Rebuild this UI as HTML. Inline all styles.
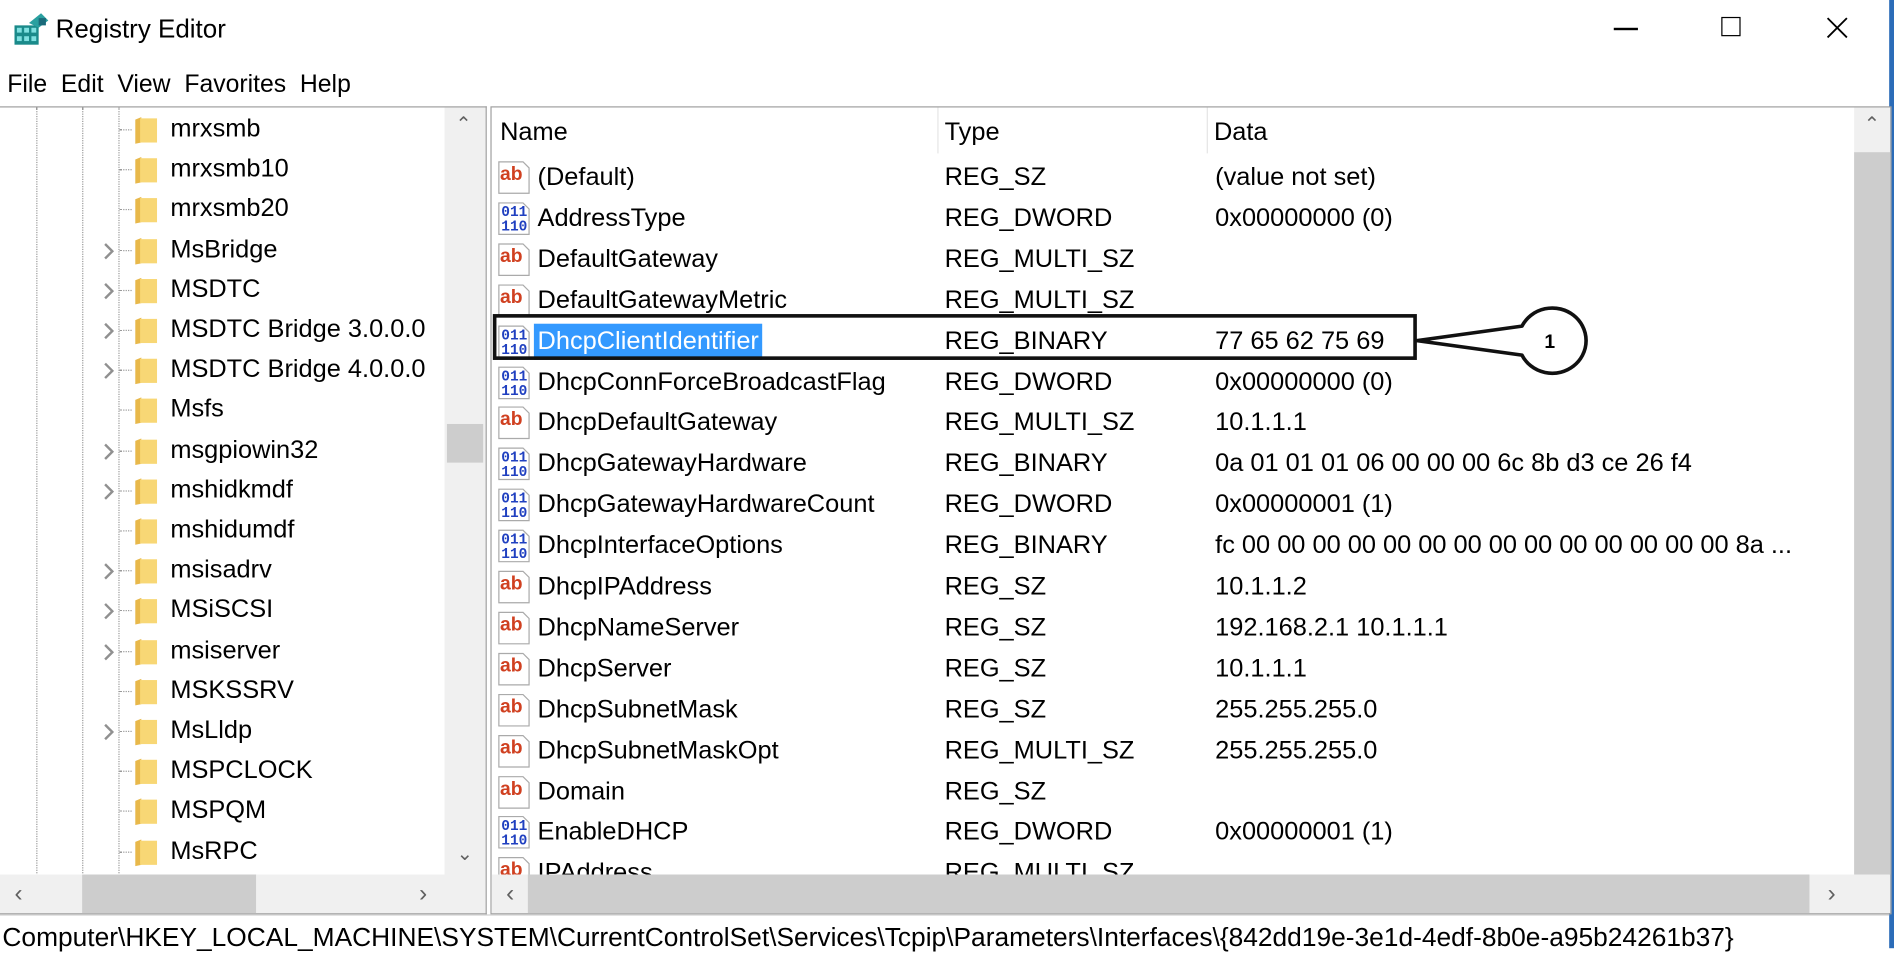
<!DOCTYPE html><html><head><meta charset="utf-8"><style>
html,body{margin:0;padding:0;width:1894px;height:948px;overflow:hidden;background:#fff}
#w{position:absolute;left:0;top:0;width:1568px;height:785px;transform:scale(1.20791);transform-origin:0 0;font-family:"Liberation Sans",sans-serif;color:#000;font-size:21px}
.a{position:absolute;white-space:nowrap}
.row{position:absolute;height:30px;line-height:30px;white-space:nowrap}
.sb{position:absolute;background:#f0f0f0}
.th{position:absolute;background:#cdcdcd}
.ar{position:absolute;color:#606060;font-size:16px}
</style></head><body><div id="w">
<svg class="a" style="left:10px;top:9px" width="32" height="30" viewBox="0 0 32 30"><rect x="2" y="12" width="20" height="16" fill="#1a8a8a"/><g fill="#7fe0e0"><rect x="4" y="14" width="4" height="4"/><rect x="10" y="14" width="4" height="4"/><rect x="16" y="14" width="4" height="4"/><rect x="4" y="21" width="4" height="4"/><rect x="10" y="21" width="4" height="4"/><rect x="16" y="21" width="4" height="4"/></g><path d="M14 10 L24 2 L30 8 L22 14Z" fill="#2aa0a0"/><rect x="22" y="6" width="6" height="6" fill="#1a6a7a"/></svg>
<div class="a" style="left:46px;top:12px;font-size:21.5px">Registry Editor</div>
<div class="a" style="left:1336px;top:23px;width:20px;height:1.5px;background:#000"></div>
<div class="a" style="left:1425px;top:14px;width:16px;height:16px;border:1.5px solid #000;box-sizing:border-box"></div>
<svg class="a" style="left:1512px;top:14px" width="18" height="18"><path d="M1 1L17 17M17 1L1 17" stroke="#000" stroke-width="1.5"/></svg>
<div class="a" style="left:1564px;top:0;width:4px;height:785px;background:#2b6cb8"></div>
<div class="a" style="left:6px;top:58px;font-size:20.5px">File&nbsp; Edit&nbsp; View&nbsp; Favorites&nbsp; Help</div>
<div class="a" style="left:0;top:88px;width:402px;height:667px;border:1px solid #a0a0a0;border-left:none;overflow:hidden">
<div class="a" style="left:30px;top:0;height:640px;border-left:1px dotted #999"></div>
<div class="a" style="left:68px;top:0;height:640px;border-left:1px dotted #999"></div>
<div class="a" style="left:98px;top:0;height:640px;border-left:1px dotted #999"></div>
<div id="tree"></div>
<div class="sb" style="left:368px;top:0;width:34px;height:635px"></div>
<div class="th" style="left:370px;top:262px;width:30px;height:32px"></div>
<div class="ar" style="left:377px;top:4px">&#8963;</div>
<div class="ar" style="left:378px;top:608px">&#8964;</div>
<div class="sb" style="left:0;top:635px;width:402px;height:32px"></div>
<div class="th" style="left:68px;top:635px;width:144px;height:32px"></div>
<div class="ar" style="left:12px;top:640px;font-size:20px">&#8249;</div>
<div class="ar" style="left:347px;top:640px;font-size:20px">&#8250;</div>
</div>
<div class="a" style="left:406px;top:88px;width:1158px;height:667px;border:1px solid #a0a0a0;overflow:hidden">
<div class="a" style="left:7px;top:9px">Name</div>
<div class="a" style="left:375px;top:9px">Type</div>
<div class="a" style="left:598px;top:9px">Data</div>
<div class="a" style="left:369px;top:0;height:38px;border-left:1px solid #e5e5e5"></div>
<div class="a" style="left:592px;top:0;height:38px;border-left:1px solid #e5e5e5"></div>
<div id="list"></div>
<div class="sb" style="left:1128px;top:0;width:30px;height:635px"></div>
<div class="th" style="left:1128px;top:37px;width:30px;height:598px"></div>
<div class="ar" style="left:1136px;top:4px">&#8963;</div>
<div class="sb" style="left:0;top:635px;width:1158px;height:32px"></div>
<div class="th" style="left:30px;top:635px;width:1061px;height:32px"></div>
<div class="ar" style="left:12px;top:640px;font-size:20px">&#8249;</div>
<div class="ar" style="left:1106px;top:640px;font-size:20px">&#8250;</div>
</div>
<div class="a" style="left:408px;top:260px;width:765px;height:38px;border:3px solid #111;box-sizing:border-box"></div>
<svg class="a" style="left:1170px;top:250px" width="150" height="64"><path d="M3 32 L90 20 A28 27 0 1 1 90 44 Z" fill="#fff" stroke="#111" stroke-width="3" stroke-linejoin="round"/><text x="113" y="38" font-family="Liberation Sans" font-size="16" font-weight="bold" text-anchor="middle">1</text></svg>
<div class="a" style="left:0;top:757px;width:1564px;border-top:1px solid #d0d0d0"></div>
<div class="a" style="left:2px;top:763px;font-size:21.8px">Computer\HKEY_LOCAL_MACHINE\SYSTEM\CurrentControlSet\Services\Tcpip\Parameters\Interfaces\{842dd19e-3e1d-4edf-8b0e-a95b24261b37}</div>
</div>
<script>
var t=[["mrxsmb",0],["mrxsmb10",0],["mrxsmb20",0],["MsBridge",1],["MSDTC",1],["MSDTC Bridge 3.0.0.0",1],["MSDTC Bridge 4.0.0.0",1],["Msfs",0],["msgpiowin32",1],["mshidkmdf",1],["mshidumdf",0],["msisadrv",1],["MSiSCSI",1],["msiserver",1],["MSKSSRV",0],["MsLldp",1],["MSPCLOCK",0],["MSPQM",0],["MsRPC",0],["MSSCNTRS",0]];
var h="";t.forEach(function(r,i){var y=i*33.2+3;h+='<div class="a" style="left:99px;top:'+(y+15)+'px;width:10px;border-top:1px dotted #999"></div>';
if(r[1])h+='<svg class="a" style="left:84px;top:'+(y+8)+'px" width="12" height="16"><path d="M3 2 L9 8 L3 14" fill="none" stroke="#909090" stroke-width="2"/></svg>';
h+='<svg class="a" style="left:111px;top:'+(y+4)+'px" width="20" height="24"><path d="M1 3 L6 1 L6 22 L1 23Z" fill="#e8b84a"/><rect x="5" y="2" width="14" height="20" fill="#f8d775"/></svg>';
h+='<div class="row" style="left:141px;top:'+y+'px">'+r[0]+'</div>'});
document.getElementById("tree").innerHTML=h;
var L=[["(Default)","REG_SZ","(value not set)"],["AddressType","REG_DWORD","0x00000000 (0)"],["DefaultGateway","REG_MULTI_SZ",""],["DefaultGatewayMetric","REG_MULTI_SZ",""],["DhcpClientIdentifier","REG_BINARY","77 65 62 75 69"],["DhcpConnForceBroadcastFlag","REG_DWORD","0x00000000 (0)"],["DhcpDefaultGateway","REG_MULTI_SZ","10.1.1.1"],["DhcpGatewayHardware","REG_BINARY","0a 01 01 01 06 00 00 00 6c 8b d3 ce 26 f4"],["DhcpGatewayHardwareCount","REG_DWORD","0x00000001 (1)"],["DhcpInterfaceOptions","REG_BINARY","fc 00 00 00 00 00 00 00 00 00 00 00 00 00 00 8a ..."],["DhcpIPAddress","REG_SZ","10.1.1.2"],["DhcpNameServer","REG_SZ","192.168.2.1 10.1.1.1"],["DhcpServer","REG_SZ","10.1.1.1"],["DhcpSubnetMask","REG_SZ","255.255.255.0"],["DhcpSubnetMaskOpt","REG_MULTI_SZ","255.255.255.0"],["Domain","REG_SZ",""],["EnableDHCP","REG_DWORD","0x00000001 (1)"],["IPAddress","REG_MULTI_SZ",""]];
h="";L.forEach(function(r,i){var y=43+i*33.9;var sz=r[1].indexOf("SZ")>=0;
h+='<svg class="a" style="left:4px;top:'+(y)+'px" width="30" height="30" viewBox="0 0 30 30"><path d="M2 2 H22 L27 7 V28 H2Z" fill="#fff" stroke="#aaa"/>'+(sz?'<text x="3" y="17" font-family="Liberation Sans" font-weight="bold" font-size="16" fill="#d04020">ab</text>':'<text x="4" y="13" font-family="Liberation Mono" font-weight="bold" font-size="12" fill="#2040c0">011</text><text x="4" y="25" font-family="Liberation Mono" font-weight="bold" font-size="12" fill="#2040c0">110</text>')+'</svg>';
var sel=i==4;h+='<div class="row" style="left:35px;top:'+y+'px;padding:0 3px;'+(sel?'background:#3399ff;color:#fff;':'')+'">'+r[0]+'</div>';
h+='<div class="row" style="left:375px;top:'+y+'px">'+r[1]+'</div><div class="row" style="left:599px;top:'+y+'px">'+r[2]+'</div>'});
document.getElementById("list").innerHTML=h;
</script>
</body></html>
